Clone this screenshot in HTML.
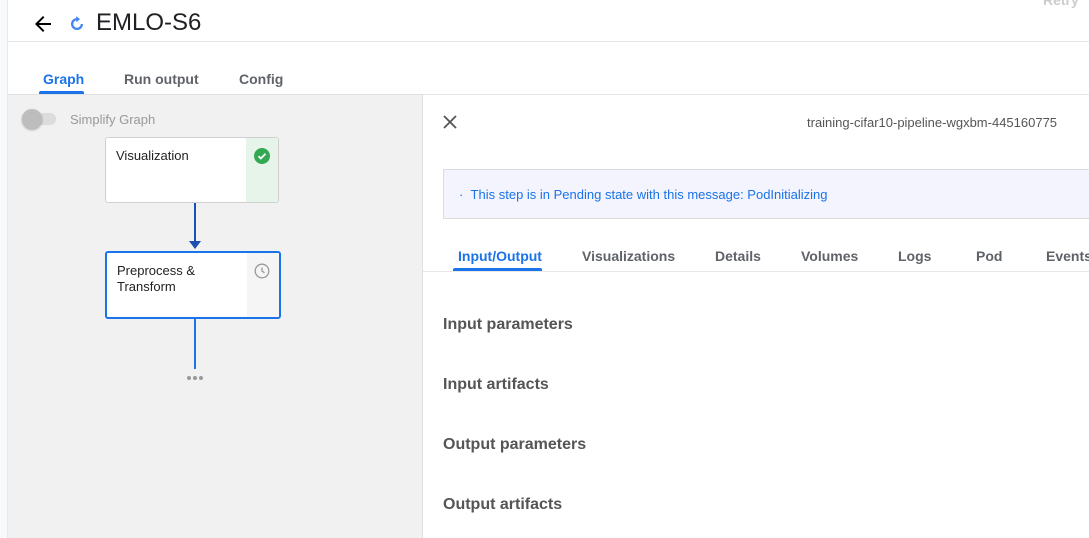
<!DOCTYPE html>
<html><head><style>
*{box-sizing:border-box;margin:0;padding:0}
body{width:1089px;height:538px;overflow:hidden;background:#fff;font-family:"Liberation Sans",sans-serif;position:relative}
.a{position:absolute}
.tab{position:absolute;font-weight:bold;font-size:14px;color:#5f6368}
.h{position:absolute;left:443px;font-weight:bold;font-size:16px;color:#555}
</style></head><body>
<div class="a" style="left:0;top:0;width:8px;height:538px;background:#f8f9fa;border-right:1px solid #e8e8e8"></div>
<svg class="a" style="left:31px;top:12px" width="24" height="24" viewBox="0 0 24 24"><path d="M20 11H7.8l5.6-5.6L12 4l-8 8 8 8 1.4-1.4L7.8 13H20z" fill="#000"/></svg>
<svg class="a" style="left:68px;top:15px" width="18" height="18" viewBox="0 0 24 24"><path d="M12 5.5a6.5 6.5 0 1 0 6.5 6.5" fill="none" stroke="#4285f4" stroke-width="3"/><path d="M11 1.5v8l5-4z" fill="#4285f4"/></svg>
<div class="a" style="left:96px;top:9px;font-size:24px;color:#202124">EMLO-S6</div>
<div class="a" style="left:1043px;top:-8px;font-size:14px;font-weight:bold;color:#ccc">Retry</div>
<div class="a" style="left:8px;top:41px;width:1081px;height:1px;background:#e8e8e8"></div>
<div class="tab" style="left:43px;top:71px;color:#1a73e8">Graph</div>
<div class="a" style="left:39px;top:91px;width:45px;height:3px;background:#1a73e8;border-radius:2px 2px 0 0"></div>
<div class="tab" style="left:124px;top:71px">Run output</div>
<div class="tab" style="left:239px;top:71px">Config</div>
<div class="a" style="left:8px;top:94px;width:415px;height:444px;background:#f1f1f1;border-top:1px solid #e0e0e0"></div>
<div class="a" style="left:24px;top:113px;width:32px;height:12px;border-radius:6px;background:#dcdcdc"></div>
<div class="a" style="left:22px;top:109px;width:20px;height:20px;border-radius:50%;background:#bdbdbd;box-shadow:0 1px 2px rgba(0,0,0,.3)"></div>
<div class="a" style="left:70px;top:112px;font-size:13px;color:#999">Simplify Graph</div>
<div class="a" style="left:105px;top:137px;width:174px;height:66px;background:#fff;border:1px solid #d0d0d0;border-radius:3px;overflow:hidden">
<div class="a" style="right:0;top:0;width:32px;height:66px;background:#e6f4ea"></div>
<div class="a" style="left:10px;top:10px;font-size:13px;color:#222">Visualization</div>
<svg class="a" style="left:148px;top:10px" width="16" height="16" viewBox="0 0 16 16"><circle cx="8" cy="8" r="8" fill="#34a853"/><path d="M4.5 8.2l2.3 2.3 4.7-4.7" stroke="#fff" stroke-width="1.8" fill="none"/></svg>
</div>
<div class="a" style="left:194px;top:203px;width:2px;height:38px;background:#1a4fb3"></div>
<div class="a" style="left:189px;top:241px;border-left:6px solid transparent;border-right:6px solid transparent;border-top:8px solid #1a4fb3"></div>
<div class="a" style="left:105px;top:251px;width:176px;height:68px;background:#fff;border:2px solid #1a73e8;border-radius:3px;overflow:hidden">
<div class="a" style="right:0;top:0;width:32px;height:66px;background:#f5f5f5"></div>
<div class="a" style="left:10px;top:10px;font-size:13px;color:#222;line-height:16px">Preprocess &amp;<br>Transform</div>
<svg class="a" style="left:147px;top:10px" width="16" height="16" viewBox="0 0 16 16"><circle cx="8" cy="8" r="6.8" fill="none" stroke="#999" stroke-width="1.3"/><path d="M8 4.5V8l2.5 1.8" stroke="#999" stroke-width="1.3" fill="none"/></svg>
</div>
<div class="a" style="left:194px;top:319px;width:2px;height:50px;background:#1a73e8"></div>
<svg class="a" style="left:186px;top:375px" width="18" height="6"><circle cx="3" cy="3" r="2" fill="#999"/><circle cx="9" cy="3" r="2" fill="#999"/><circle cx="15" cy="3" r="2" fill="#999"/></svg>
<div class="a" style="left:422px;top:94px;width:1px;height:444px;background:#e0e0e0"></div>
<div class="a" style="left:423px;top:94px;width:666px;height:1px;background:#e8e8e8"></div>
<svg class="a" style="left:441px;top:113px" width="18" height="18" viewBox="0 0 18 18"><path d="M3 3l12 12M15 3L3 15" stroke="#555" stroke-width="1.8"/></svg>
<div class="a" style="left:807px;top:115px;font-size:13px;color:#555">training-cifar10-pipeline-wgxbm-445160775</div>
<div class="a" style="left:443px;top:169px;width:650px;height:50px;background:#f3f4fd;border:1px solid #dcdcdc"></div>
<div class="a" style="left:459px;top:187px;font-size:13px;color:#1a73e8">· &nbsp;This step is in Pending state with this message: PodInitializing</div>
<div class="tab" style="left:458px;top:248px;color:#1a73e8">Input/Output</div>
<div class="a" style="left:453px;top:268px;width:89px;height:3px;background:#1a73e8;border-radius:2px 2px 0 0"></div>
<div class="tab" style="left:582px;top:248px">Visualizations</div>
<div class="tab" style="left:715px;top:248px">Details</div>
<div class="tab" style="left:801px;top:248px">Volumes</div>
<div class="tab" style="left:898px;top:248px">Logs</div>
<div class="tab" style="left:976px;top:248px">Pod</div>
<div class="tab" style="left:1046px;top:248px">Events</div>
<div class="a" style="left:423px;top:271px;width:666px;height:1px;background:#e8e8e8"></div>
<div class="h" style="top:316px">Input parameters</div>
<div class="h" style="top:376px">Input artifacts</div>
<div class="h" style="top:436px">Output parameters</div>
<div class="h" style="top:496px">Output artifacts</div>
</body></html>
